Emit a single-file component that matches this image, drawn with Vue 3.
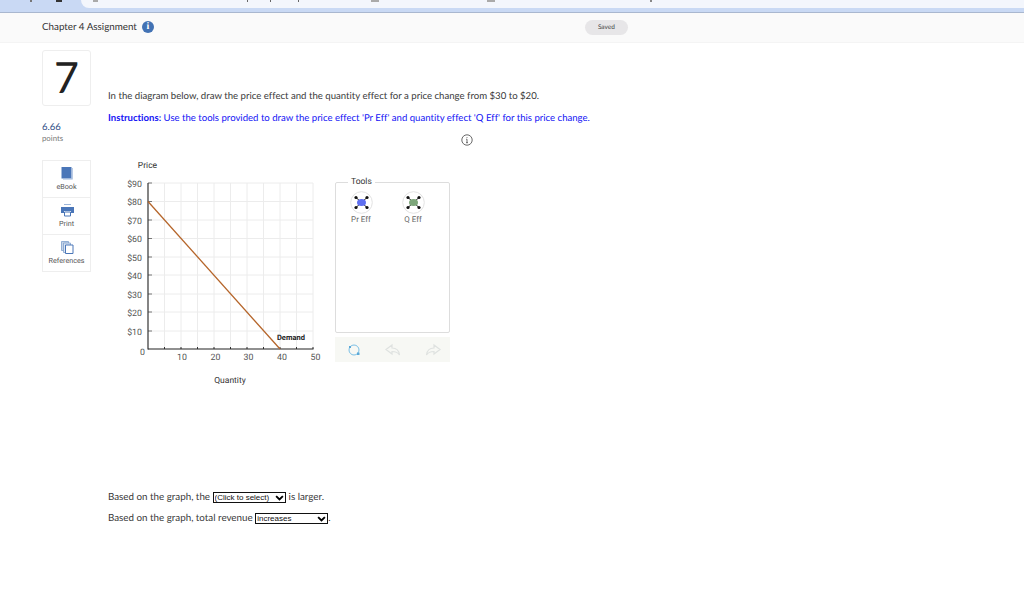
<script setup>
const ticksY = [
  { l: '$90', y: 183 }, { l: '$80', y: 201.5 }, { l: '$70', y: 220 }, { l: '$60', y: 238.5 },
  { l: '$50', y: 257 }, { l: '$40', y: 275 }, { l: '$30', y: 294 }, { l: '$20', y: 312 }, { l: '$10', y: 331 }
]
const gridX = [164.5, 181, 197.5, 214, 230.5, 247, 263.5, 280, 296.5, 313]
const labelsX = [
  { l: '10', x: 182 }, { l: '20', x: 215.5 }, { l: '30', x: 248.5 }, { l: '40', x: 282 }, { l: '50', x: 315.5 }
]
const sideItems = [
  { label: 'eBook', kind: 'book' },
  { label: 'Print', kind: 'print' },
  { label: 'References', kind: 'refs' }
]
const tools = [
  { label: 'Pr Eff', fill: '#5f6ff0' },
  { label: 'Q Eff', fill: '#7da67a' }
]
const nodes = [[-5.5, -5], [5.5, -5], [-5.5, 5], [5.5, 5]]
const marks = [
  { x: 56, w: 6, c: '#333' }, { x: 30, w: 2, c: '#777' }, { x: 93, w: 5, c: '#aaa' },
  { x: 247, w: 1, c: '#666' }, { x: 270, w: 1, c: '#666' }, { x: 298, w: 1, c: '#666' },
  { x: 371, w: 8, c: '#aaa' }, { x: 487, w: 8, c: '#aaa' }, { x: 650, w: 2, c: '#888' }
]
</script>

<template>
  <div class="page">
    <div class="browser">
      <div class="tab"></div>
      <i v-for="m in marks" :key="m.x" class="mark" :style="{ left: m.x + 'px', width: m.w + 'px', background: m.c }"></i>
    </div>
    <header class="head">
      <span class="title">Chapter 4 Assignment</span>
      <span class="info-badge">i</span>
      <span class="saved">Saved</span>
    </header>
    <main class="main">
      <aside class="side">
        <div class="qnum">7</div>
        <div class="pts">6.66</div>
        <div class="pts-l">points</div>
        <nav class="tabs">
          <div v-for="s in sideItems" :key="s.label" class="tabitem">
            <svg width="14" height="14" viewBox="0 0 14 14">
              <template v-if="s.kind === 'book'">
                <path d="M1.500 1h10v11.500h-10z" fill="#4a76b8" />
                <path d="M11.500 2h1.200v11.500H3v-1h8.500z" fill="#9db6da" />
              </template>
              <template v-else-if="s.kind === 'print'">
                <path d="M4 1h7v1H4z" fill="#9db6da" />
                <path d="M1 4h13v6h-3V8H4v2H1z" fill="#4a76b8" />
                <path d="M4.500 9h6v4h-6z" fill="#fff" stroke="#4a76b8" />
              </template>
              <template v-else>
                <path d="M1.500 1.500h7v9h-7z" fill="#c6d4e8" stroke="#7f9fcc" stroke-width=".8" />
                <path d="M3.500 3h7v9.500h-7z" fill="#dbe5f2" stroke="#7f9fcc" stroke-width=".8" />
                <path d="M5.500 5h7.500v8.500H5.500z" fill="#fff" stroke="#4a76b8" />
              </template>
            </svg>
            <span>{{ s.label }}</span>
          </div>
        </nav>
      </aside>
      <section class="content">
        <p class="q">In the diagram below, draw the price effect and the quantity effect for a price change from $30 to $20.</p>
        <p class="instr"><b>Instructions:</b> Use the tools provided to draw the price effect 'Pr Eff' and quantity effect 'Q Eff' for this price change.</p>
        <div class="info-row">
          <svg width="12" height="12" viewBox="0 0 12 12"><circle cx="6" cy="6" r="5.200" fill="none" stroke="#444" stroke-width=".8" /><path d="M6 3.200v.8M5.200 5.200H6v3.300M5 8.700h2" stroke="#444" stroke-width=".8" fill="none" /></svg>
        </div>
        <div class="work">
          <svg class="chart" width="212" height="240" viewBox="120 150 212 240">
            <g stroke="#ececec" stroke-width="1">
              <line v-for="x in gridX" :key="x" :x1="x" :x2="x" y1="183" y2="349" />
              <line v-for="t in ticksY" :key="t.l" x1="148" x2="313" :y1="t.y" :y2="t.y" />
            </g>
            <g stroke="#777" stroke-width="1">
              <line v-for="t in ticksY" :key="'t' + t.l" x1="148" x2="152" :y1="t.y" :y2="t.y" />
            </g>
            <g stroke="#333" stroke-width="1">
              <line v-for="x in gridX" :key="'k' + x" :x1="x" :x2="x" y1="347" y2="349" />
            </g>
            <line x1="148" x2="148" y1="183" y2="349.500" stroke="#333" stroke-width="1.200" />
            <line x1="148" x2="313.500" y1="349" y2="349" stroke="#222" stroke-width="1.200" />
            <line x1="148" y1="201.500" x2="280" y2="349" stroke="#b5652a" stroke-width="1.300" />
            <g class="axis-t" text-anchor="end">
              <text v-for="t in ticksY" :key="'l' + t.l" x="142" :y="t.y + 3.500">{{ t.l }}</text>
            </g>
            <g class="axis-t" text-anchor="middle">
              <text v-for="t in labelsX" :key="t.l" :x="t.x" y="360">{{ t.l }}</text>
            </g>
            <text class="axis-t" x="142.500" y="355" text-anchor="middle">0</text>
            <text class="name" x="147.500" y="167.500" text-anchor="middle">Price</text>
            <text class="name" x="230" y="382.500" text-anchor="middle">Quantity</text>
            <text class="demand" x="277" y="340">Demand</text>
          </svg>
          <div class="toolcol">
            <fieldset class="tools">
              <legend>Tools</legend>
              <div class="toolrow">
                <div v-for="t in tools" :key="t.label" class="tool">
                  <svg width="23" height="23" viewBox="-11.500 -11.500 23 23">
                    <circle r="10.800" fill="#fff" stroke="#e2e2e2" />
                    <path d="M-5.500-5 5.500 5M5.500-5-5.500 5" stroke="#222" stroke-width="1" />
                    <ellipse rx="4.500" ry="3.600" :fill="t.fill" />
                    <circle v-for="n in nodes" :key="n.join()" :cx="n[0]" :cy="n[1]" r="1.600" fill="#111" />
                  </svg>
                  <span>{{ t.label }}</span>
                </div>
              </div>
            </fieldset>
            <div class="bar">
              <svg width="14" height="14" viewBox="0 0 14 14"><circle cx="7" cy="7" r="5" fill="none" stroke="#7cc0e6" stroke-width="1" /><path d="M10 9.500h2.500V12H10zM2 3h2v2H2z" fill="#5ba9d8" /></svg>
              <svg width="16" height="14" viewBox="0 0 16 14"><path d="M1 6.500 7 2v3c4 0 7 2.500 7.500 7-1.500-2.500-4-3.500-7.500-3.500V11z" fill="none" stroke="#dfe2e0" stroke-width="1.200" /></svg>
              <svg width="16" height="14" viewBox="0 0 16 14"><path d="M15 6.500 9 2v3c-4 0-7 2.500-7.500 7C3 9.500 5.500 8.500 9 8.500V11z" fill="none" stroke="#dfe2e0" stroke-width="1.200" /></svg>
            </div>
          </div>
        </div>
        <p class="ans first">
          Based on the graph, the
          <span class="sel w1"><select><option>(Click to select)</option></select><svg class="chev" width="9" height="6" viewBox="0 0 12 8"><path d="M1.500 1.500 6 6l4.500-4.500" fill="none" stroke="#000" stroke-width="2.500" /></svg></span>
          <span class="after">is larger.</span>
        </p>
        <p class="ans second">
          Based on the graph, total revenue
          <span class="sel w2"><select><option>increases</option></select><svg class="chev" width="9" height="6" viewBox="0 0 12 8"><path d="M1.500 1.500 6 6l4.500-4.500" fill="none" stroke="#000" stroke-width="2.500" /></svg></span>.
        </p>
      </section>
    </main>
  </div>
</template>

<style>
html, body { margin: 0; background: #fff; }
</style>

<style scoped>
.page { width: 1024px; height: 609px; overflow: hidden; font-family: "Lato", "Liberation Sans", sans-serif; font-variant-ligatures: none; text-rendering: geometricPrecision; color: #333; background: #fff; }
.browser { position: relative; height: 12px; background: #c9d9f4; border-bottom: 1px solid #a9b7cf; padding-left: 81px; }
.tab { height: 8px; background: #f3f6fc; border-bottom-left-radius: 8px; }
.mark { position: absolute; top: 0; height: 2px; }
.head { height: 30px; background: #fafafa; display: flex; align-items: center; padding: 0 0 2px 42px; border-bottom: 1px solid #f4f4f4; box-sizing: border-box; }
.title { font-size: 9.800px; color: #333; }
.info-badge { width: 12px; height: 12px; margin-left: 5px; border-radius: 50%; background: #4272b4; color: #fff; font: bold 10px/12px "Liberation Serif", serif; text-align: center; }
.saved { margin: 2px 0 0 431px; width: 43px; height: 15px; border-radius: 8px; background: #e7e6e8; font-size: 6.500px; line-height: 15px; text-align: center; color: #444; }
.main { display: flex; padding-left: 42px; }
.side { width: 66px; flex: none; padding-top: 7px; }
.qnum { width: 49px; height: 56px; border: 1px solid #eee; border-radius: 3px; box-sizing: border-box; font-size: 43px; line-height: 54px; text-align: center; color: #222; }
.pts { margin-top: 16px; font-size: 9.500px; line-height: 11px; color: #2b4a83; }
.pts-l { font-size: 7.800px; line-height: 11px; color: #777; }
.tabs { margin-top: 17px; width: 49px; }
.tabitem { height: 38px; box-sizing: border-box; border: 1px solid #eee; margin-top: -1px; display: flex; flex-direction: column; align-items: center; padding-top: 5px; font: 7.200px/9px "Roboto", sans-serif; color: #555; }
.tabitem span { margin-top: 2px; }
.content { flex: none; width: 880px; padding-top: 47px; }
p { margin: 0; }
.q { font-size: 9.620px; line-height: 13px; color: #3a3a3a; white-space: nowrap; }
.instr { margin-top: 9px; font-size: 9.580px; line-height: 13px; color: #1414f5; white-space: nowrap; }
.info-row { margin-top: 9px; padding-left: 353px; height: 13px; line-height: 0; }
.work { display: flex; margin-left: 12px; margin-top: 3px; height: 240px; }
.chart { display: block; flex: none; }
.axis-t { font: 8.800px "Roboto", sans-serif; fill: #555; }
.name { font: 8.500px "Roboto", sans-serif; fill: #333; }
.demand { font: 700 7.500px "Roboto", sans-serif; fill: #222; }
.toolcol { margin-left: 3px; width: 115px; padding-top: 27px; }
.tools { margin: 0; padding: 0; width: 115px; height: 156px; box-sizing: border-box; border: 1px solid #ddd; border-radius: 2px; }
.tools legend { font: 8.500px/11px "Roboto", sans-serif; color: #333; margin-left: 12px; padding: 0 3px; }
.toolrow { display: flex; padding: 0 0 0 13px; gap: 28px; margin-top: 3px; }
.tool { width: 24px; display: flex; flex-direction: column; align-items: center; font: 8px/10px "Roboto", sans-serif; color: #666; }
.tool span { margin-top: 1px; white-space: nowrap; }
.bar { margin-top: 4px; height: 25px; background: #f7f8f4; display: flex; align-items: center; gap: 24px; padding-left: 12px; }
.ans { font-size: 9.800px; line-height: 14px; color: #3a3a3a; white-space: nowrap; }
.first { margin-top: 100px; }
.second { margin-top: 7px; }
.after { margin-left: 3px; }
.sel { position: relative; display: inline-block; vertical-align: middle; height: 11px; box-sizing: border-box; border: 1px solid #111; background: #fff; }
.sel select { appearance: none; border: 0; background: transparent; padding: 0 0 0 1px; margin: 0; width: 100%; height: 9px; display: block; font: 8px/9px "Liberation Sans", sans-serif; color: #111; }
.w1 { width: 73px; }
.w2 { width: 73px; }
.chev { position: absolute; right: 1px; top: 1.500px; }
</style>
